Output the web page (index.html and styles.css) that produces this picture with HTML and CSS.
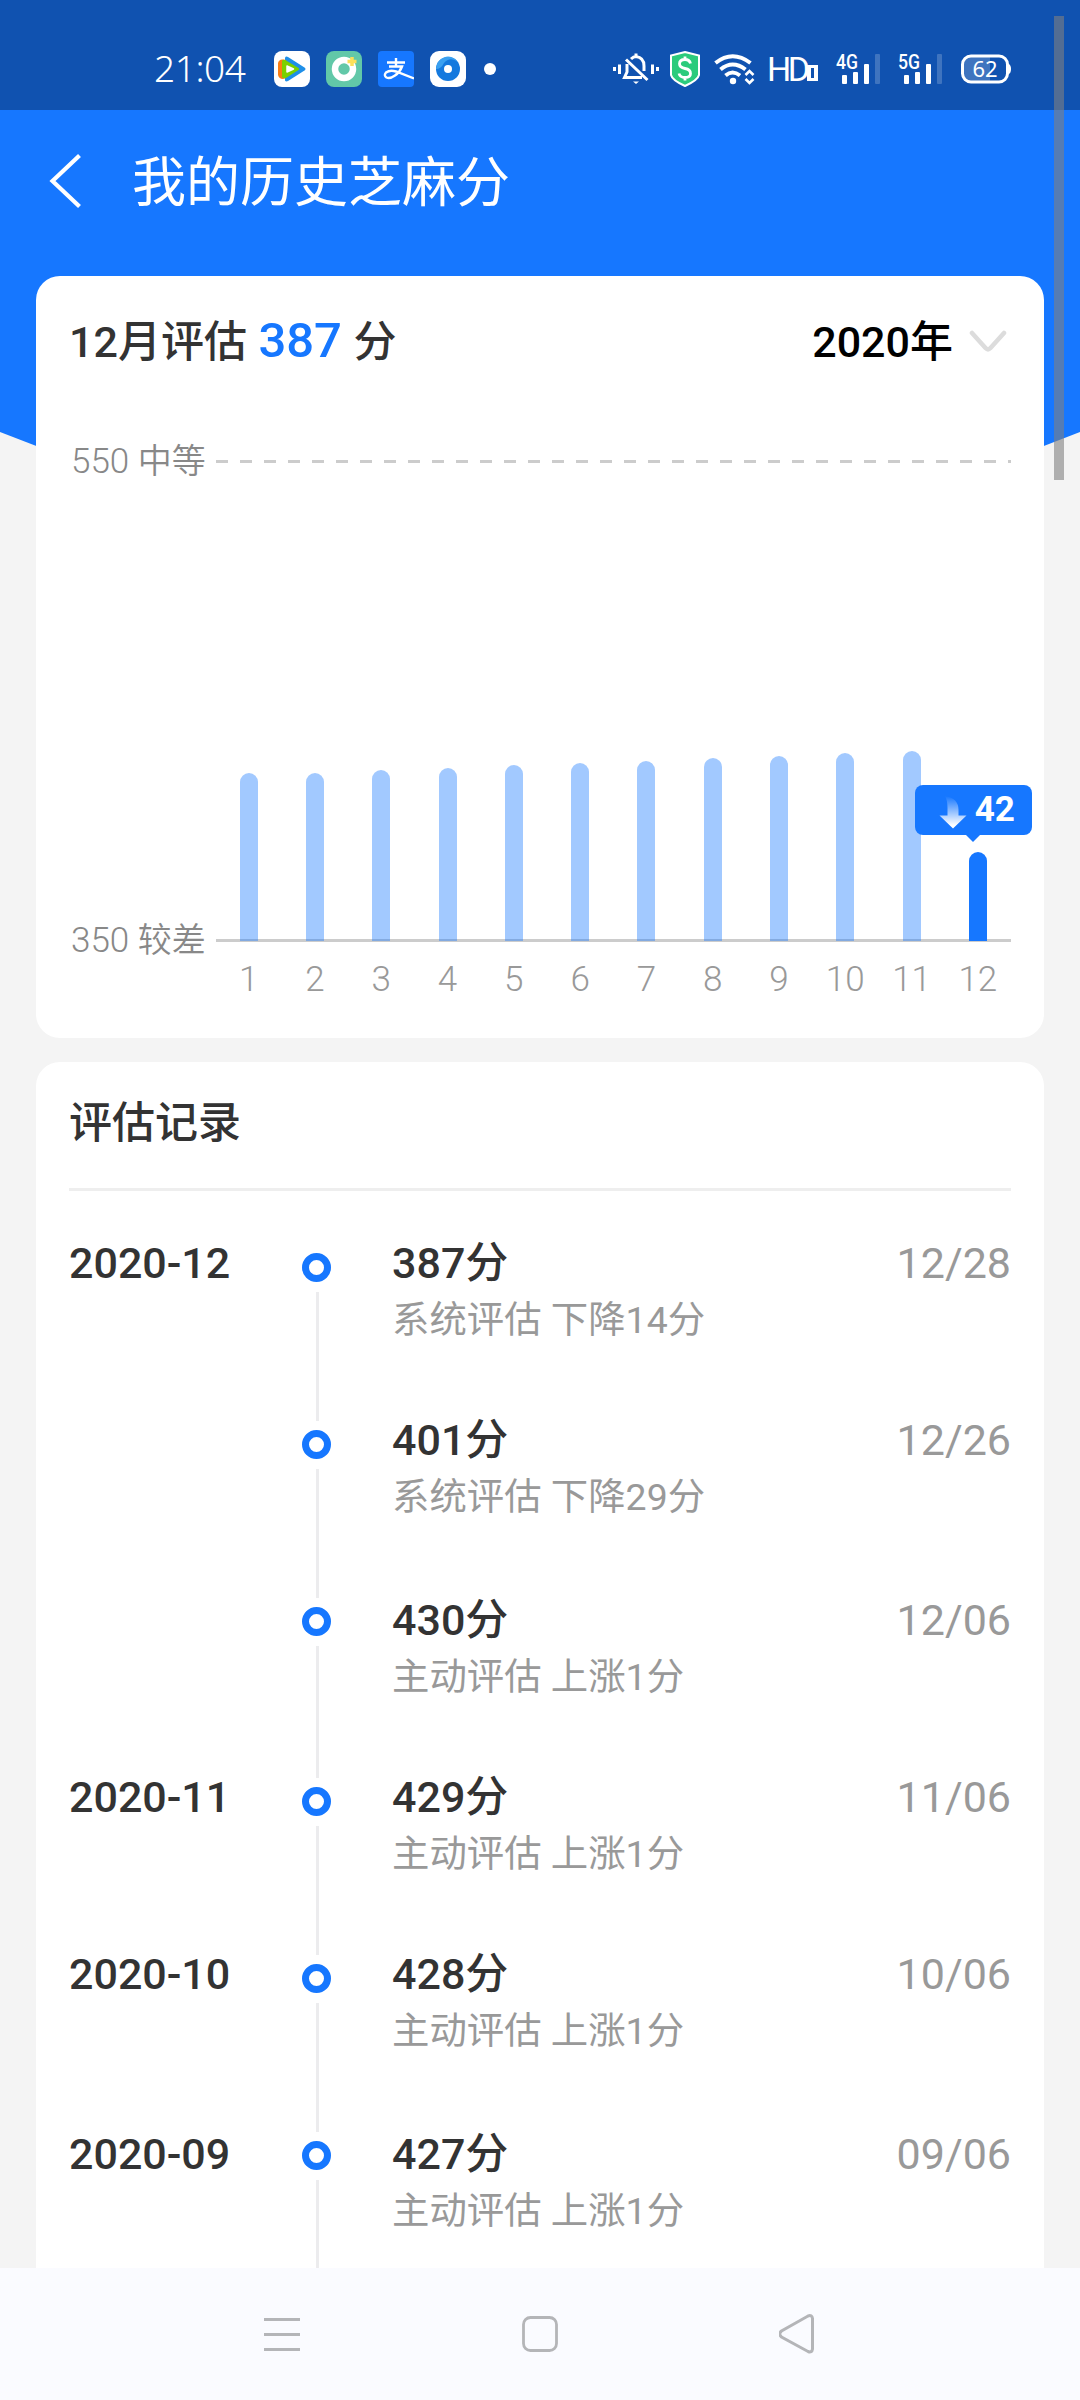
FILE: index.html
```html
<!DOCTYPE html>
<html lang="zh-CN">
<head>
<meta charset="utf-8">
<title>我的历史芝麻分</title>
<link rel="stylesheet" href="styles.css">
</head>
<body>
<div class="screen">
  <header class="hero">
    <div class="status">
      <span class="clock">21:04</span>
      <div class="apps">
        <svg width="36" height="36" viewBox="0 0 36 36"><rect width="36" height="36" rx="8" fill="#fff"/><path d="M11 6.500Q12 5 14 6L30.500 16.500Q32.500 18 30.500 19.500L14 30Q12 31 11 29.500Z" fill="#1f8fe8"/><path d="M4 12Q5 8 9 8.500L12 9V27L9 28Q5 28 4 24Z" fill="#fa7d14"/><path d="M8 10Q9 8 12 9.500L24.500 17Q26 18 24.500 19L12 27Q9 28 8 26Z" fill="#7bd000"/><path d="M13 15L19.500 18L13 21Z" fill="#fff" stroke="#fff" stroke-width="1.500" stroke-linejoin="round"/></svg>
        <svg width="36" height="36" viewBox="0 0 36 36"><rect width="36" height="36" rx="8" fill="#62c8a8"/><circle cx="18" cy="18" r="9" fill="none" stroke="#fff" stroke-width="6.500"/><path d="M26 6v9M21.500 10.500h9" stroke="#fbe05a" stroke-width="3.500"/></svg>
        <svg width="36" height="36" viewBox="0 0 36 36"><rect width="36" height="36" rx="4" fill="#1677ff"/><path d="M9 11.500h18M18 7v8.500M11 15.500h13Q22 21 17 24.500Q12 28 8.500 26.500Q5.500 24.500 8 21.500Q12 18.500 18 20.500L36 27.500" fill="none" stroke="#fff" stroke-width="2.400"/></svg>
        <svg width="36" height="36" viewBox="0 0 36 36"><rect width="36" height="36" rx="9" fill="#fff"/><circle cx="18" cy="18" r="12" fill="#1479de"/><path d="M6 18A12 12 0 0 1 28 11Q20 5 14 12Q11 18 6 18Z" fill="#3aa0f0"/><circle cx="18" cy="18" r="4" fill="#fff"/></svg>
        <i class="more-dot"></i>
      </div>
      <div class="system">
        <svg class="bell" width="46" height="36" viewBox="0 0 46 36" fill="none" stroke="#fff"><path d="M1.500 16v4M6.500 13.500v9.500M39.500 13.500v9.500M44.500 16v4" stroke-width="3"/><path d="M18 8Q20.500 5.500 23 5.500Q31 6.500 31 15V20M14 13V21L11.500 26.500H29M23 2.500V6M13 8.500L34.500 29" stroke-width="3"/><path d="M20 30.500h6L23 33Z" fill="#fff" stroke="none"/></svg>
        <svg class="shield" width="30" height="36" viewBox="0 0 30 36"><path d="M15 1L29 4.500V24Q28 29 15 35Q2 29 1 24V4.500Z" fill="#2bcb7c" stroke="#fff" stroke-width="2"/><path d="M20.500 12.500Q19.500 8.500 15 8.500Q9.500 8.500 9.500 12.800Q9.500 16.500 15 17.500Q20.500 18.500 20.500 22.500Q20.500 26.500 15 26.500Q10 26.500 9 22.500M15 5.500v3M15 26.500v3" fill="none" stroke="#fff" stroke-width="2.800"/></svg>
        <svg class="wifi" width="41" height="36" viewBox="0 0 41 36" fill="none" stroke="#fff" stroke-width="4"><path d="M1.500 12Q18.500-1.500 36.500 12M6.500 18.500Q18.500 8.500 31.500 18.500M11.500 24.500Q18.500 18.500 26 24.500"/><circle cx="19" cy="30" r="3.200" fill="#fff" stroke="none"/><path d="M31.500 24L35.500 20L39.500 24M31.500 28L35.500 32L39.500 28" stroke-width="2.600"/></svg>
        <span class="hd">HD</span><i class="hd-box"></i>
        <svg class="cell" width="44" height="36" viewBox="0 0 44 36"><text class="net" x="0" y="17.500" textLength="22" lengthAdjust="spacingAndGlyphs">4G</text><g fill="#fff"><rect x="6" y="24" width="5" height="9" rx="1"/><rect x="17" y="21" width="5" height="12" rx="1"/><rect x="28" y="13" width="5" height="20" rx="1"/><rect x="39" y="3" width="5" height="30" rx="1" opacity=".2"/></g></svg>
        <svg class="cell" width="44" height="36" viewBox="0 0 44 36"><text class="net" x="0" y="17.500" textLength="22" lengthAdjust="spacingAndGlyphs">5G</text><g fill="#fff"><rect x="6" y="24" width="5" height="9" rx="1"/><rect x="17" y="21" width="5" height="12" rx="1"/><rect x="28" y="13" width="5" height="20" rx="1"/><rect x="39" y="3" width="5" height="30" rx="1" opacity=".2"/></g></svg>
        <svg class="battery" width="51" height="36" viewBox="0 0 51 36"><path d="M10 5.500H30V31.500H10Q2 31.500 2 24V13Q2 5.500 10 5.500Z" fill="#fff" opacity=".2"/><rect x="2.500" y="5" width="45" height="26" rx="8.500" fill="none" stroke="#fff" stroke-width="3"/><path d="M48 12.500Q51 13.500 51 18Q51 22.500 48 23.500Z" fill="#fff"/><text class="level" x="25" y="26" text-anchor="middle">62</text></svg>
      </div>
    </div>
    <div class="titlebar">
      <svg width="36" height="56" viewBox="0 0 36 56"><path d="M31.500 2.500L4.500 28L31.500 53.500" fill="none" stroke="#fff" stroke-width="4.200"/></svg>
      <h1>我的历史芝麻分</h1>
    </div>
  </header>

  <main class="content">
    <section class="card trend">
      <div class="trend-head">
        <div class="summary"><span>12月评估</span><b>387</b><span>分</span></div>
        <div class="year"><span>2020年</span><svg width="38" height="24" viewBox="0 0 38 24"><path d="M3 3L16.500 18Q19 20.500 21.500 18L35 3" fill="none" stroke="#dcdcdc" stroke-width="4.500" stroke-linecap="round"/></svg></div>
      </div>
      <div class="chart">
        <div class="levels"><span>550 <em>中等</em></span><span>350 <em>较差</em></span></div>
        <div class="plot">
          <div class="col"><i class="bar" style="height:168px"></i></div>
          <div class="col"><i class="bar" style="height:168px"></i></div>
          <div class="col"><i class="bar" style="height:170.4px"></i></div>
          <div class="col"><i class="bar" style="height:172.8px"></i></div>
          <div class="col"><i class="bar" style="height:175.2px"></i></div>
          <div class="col"><i class="bar" style="height:177.6px"></i></div>
          <div class="col"><i class="bar" style="height:180px"></i></div>
          <div class="col"><i class="bar" style="height:182.4px"></i></div>
          <div class="col"><i class="bar" style="height:184.8px"></i></div>
          <div class="col"><i class="bar" style="height:187.2px"></i></div>
          <div class="col"><i class="bar" style="height:189.6px"></i></div>
          <div class="col"><i class="bar current" style="height:88.8px"></i>
            <div class="tip"><svg width="28" height="34" viewBox="0 0 28 34"><defs><linearGradient id="fall" x1="0" y1="0" x2="0" y2="1"><stop offset="0" stop-color="#fff" stop-opacity="0"/><stop offset=".9" stop-color="#fff"/></linearGradient></defs><path d="M6 1Q19.500 3 19.500 15V20.500H27.500L14 33.500L0.500 20.500H8.500V13Q8.500 5 6 1Z" fill="url(#fall)"/></svg><span>42</span></div>
          </div>
        </div>
        <div class="months"><span>1</span><span>2</span><span>3</span><span>4</span><span>5</span><span>6</span><span>7</span><span>8</span><span>9</span><span>10</span><span>11</span><span>12</span></div>
      </div>
    </section>

    <section class="card records">
      <h2>评估记录</h2>
      <ul class="timeline">
        <li><span class="month">2020-12</span><span class="mark"></span><div class="entry"><b>387分</b><p>系统评估 下降14分</p></div><time>12/28</time></li>
        <li><span class="month"></span><span class="mark"></span><div class="entry"><b>401分</b><p>系统评估 下降29分</p></div><time>12/26</time></li>
        <li><span class="month"></span><span class="mark"></span><div class="entry"><b>430分</b><p>主动评估 上涨1分</p></div><time>12/06</time></li>
        <li><span class="month">2020-11</span><span class="mark"></span><div class="entry"><b>429分</b><p>主动评估 上涨1分</p></div><time>11/06</time></li>
        <li><span class="month">2020-10</span><span class="mark"></span><div class="entry"><b>428分</b><p>主动评估 上涨1分</p></div><time>10/06</time></li>
        <li><span class="month">2020-09</span><span class="mark"></span><div class="entry"><b>427分</b><p>主动评估 上涨1分</p></div><time>09/06</time></li>
      </ul>
    </section>
  </main>

  <nav class="navbar">
    <svg width="38" height="42" viewBox="0 0 38 42" stroke="#b4b5b8" stroke-width="3"><path d="M1 6.500h36M1 21.500h36M1 36.500h36"/></svg>
    <svg width="38" height="42" viewBox="0 0 38 42" fill="none" stroke="#b4b5b8" stroke-width="2.800"><rect x="2.500" y="4.500" width="33" height="33" rx="7"/></svg>
    <svg width="38" height="42" viewBox="0 0 38 42" fill="none" stroke="#b4b5b8" stroke-width="3"><path d="M33.500 5.500V36Q33 40 29 38.500L2.500 24Q-1 21 2.500 18L29 3Q33 1.500 33.500 5.500Z"/></svg>
  </nav>
  <i class="scrollbar"></i>
</div>
</body>
</html>
```
FILE: styles.css
```css
*, *::before, *::after { box-sizing: border-box; margin: 0; padding: 0; }
body {
  background: #f4f4f4;
  color: #333;
  font-family: Roboto, "Noto Sans CJK SC", sans-serif;
}
svg { display: block; flex: none; }
.screen {
  position: relative;
  display: flex;
  flex-direction: column;
  width: 1080px;
  height: 2400px;
  overflow: hidden;
}

/* header */
.hero {
  flex: none;
  height: 640px;
  margin-bottom: -364px;
  background: #1677ff;
  clip-path: polygon(0 0, 100% 0, 100% 432px, 540px 640px, 0 432px);
}
.status {
  display: flex;
  align-items: center;
  height: 110px;
  padding: 28px 69px 0 154px;
  background: #1052b0;
  color: #fff;
}
.clock {
  width: 120px;
  margin-top: -2px;
  font: 350 37px/36px "Noto Sans", sans-serif;
  letter-spacing: -.4px;
}
.apps { display: flex; align-items: center; gap: 16px; }
.more-dot { width: 12px; height: 12px; margin-left: 2px; border-radius: 50%; background: #fff; }
.system { display: flex; align-items: center; margin-left: auto; }
.shield { margin-left: 11px; }
.wifi { margin-left: 14px; }
.hd { width: 40px; margin-left: 12px; font: 400 34px/36px Roboto, sans-serif; letter-spacing: -3.500px; white-space: nowrap; }
.hd-box { flex: none; width: 11px; height: 16px; margin-top: 8px; border: 4px solid #fff; border-width: 3px 4px; }
.cell { margin-left: 18px; }
.battery { margin-left: 18px; }
.net { fill: #fff; font: 500 20px Roboto, sans-serif; }
.level { fill: #fff; font: 400 22px "Noto Sans", sans-serif; }
.titlebar { display: flex; align-items: center; gap: 48px; height: 142px; padding-left: 48px; }
.titlebar h1 {
  margin-top: -4px;
  color: #fff;
  font: 400 54px/70px "Noto Sans CJK SC", sans-serif;
}

/* cards */
.content {
  position: relative;
  flex: 1;
  min-height: 0;
  display: flex;
  flex-direction: column;
  gap: 24px;
  padding: 0 36px;
  overflow: hidden;
}
.card { flex: none; border-radius: 24px; background: #fff; }
.trend { height: 762px; padding: 35px 33px 40px 35px; }
.trend-head {
  display: flex;
  justify-content: space-between;
  margin-left: -2px;
  font-size: 43px;
  font-weight: 500;
  line-height: 60px;
}
.summary { display: flex; align-items: baseline; gap: 11.500px; }
.summary b { color: #1677ff; font-size: 49px; font-weight: 500; }
.year { display: flex; align-items: center; gap: 16px; padding-right: 4px; color: #000; }

.chart {
  display: grid;
  grid-template: 520px 38px / 144.500px 795.500px;
  align-items: center;
  margin-top: 69px;
}
.levels {
  display: flex;
  flex-direction: column;
  justify-content: space-between;
  height: 520px;
  color: #888;
  font-size: 35px;
  font-weight: 300;
  line-height: 40px;
  white-space: nowrap;
}
.levels em { font-size: 34px; font-style: normal; font-weight: 350; }
.plot {
  display: grid;
  grid-template-columns: repeat(12, 1fr);
  height: 482px;
  padding-bottom: 1.400px;
  background:
    repeating-linear-gradient(90deg, #ccc 0 12px, transparent 12px 24px) 0 0 / 100% 3px no-repeat,
    linear-gradient(#ccc, #ccc) 0 100% / 100% 3px no-repeat;
}
.col { position: relative; display: flex; align-items: flex-end; justify-content: center; }
.bar { width: 18px; border-radius: 9px 9px 0 0; background: rgba(22, 119, 255, .4); }
.bar.current { background: #1677ff; }
.tip {
  position: absolute;
  left: -30px;
  bottom: 106px;
  display: flex;
  align-items: center;
  gap: 8px;
  width: 117px;
  height: 50px;
  padding-left: 24px;
  border-radius: 8px;
  background: #1677ff;
  color: #fff;
  font-size: 35px;
  font-weight: 700;
  line-height: 50px;
}
.tip svg { margin-top: 5px; }
.tip::after {
  content: "";
  position: absolute;
  left: 51px;
  top: 100%;
  border: solid transparent;
  border-width: 7px 7.500px 0;
  border-top-color: #1677ff;
}
.months {
  grid-column: 2;
  display: grid;
  grid-template-columns: repeat(12, 1fr);
  color: #999;
  font-size: 35px;
  font-weight: 300;
  line-height: 38px;
  text-align: center;
}

/* history */
.records { padding: 0 33px; }
.records h2 {
  height: 129px;
  border-bottom: 3px solid #eee;
  font-size: 43px;
  font-weight: 500;
  line-height: 123px;
}
.timeline { padding-top: 53px; list-style: none; }
.timeline li {
  display: grid;
  grid-template-columns: 233px 90px 1fr auto;
  height: 177px;
  font-size: 43px;
  line-height: 38px;
}
.timeline li:nth-child(3n+2) { height: 180px; }
.month, .entry b { font-weight: 500; }
.mark { display: flex; flex-direction: column; width: 29px; padding-top: 9px; }
.mark::before { content: ""; flex: none; height: 29px; border: 7px solid #1677ff; border-radius: 50%; }
.mark::after { content: ""; flex: 1; width: 3px; margin: 9.500px 0 0 14px; background: #ececee; }
.timeline li:nth-child(3n+2) .mark { padding-bottom: 3px; }
.timeline li:nth-child(3n) .mark { padding-top: 6px; }
.entry p { margin-top: 16px; color: #999; font-size: 37.400px; line-height: 44px; }
.timeline time { color: #999; }

/* system navigation */
.navbar {
  position: relative;
  flex: none;
  display: flex;
  justify-content: center;
  gap: 220px;
  height: 132px;
  padding-top: 45px;
  background: #fafbff;
}
.scrollbar { position: absolute; left: 1054px; top: 16px; width: 10px; height: 464px; background: rgba(128, 128, 128, .6); }
```
